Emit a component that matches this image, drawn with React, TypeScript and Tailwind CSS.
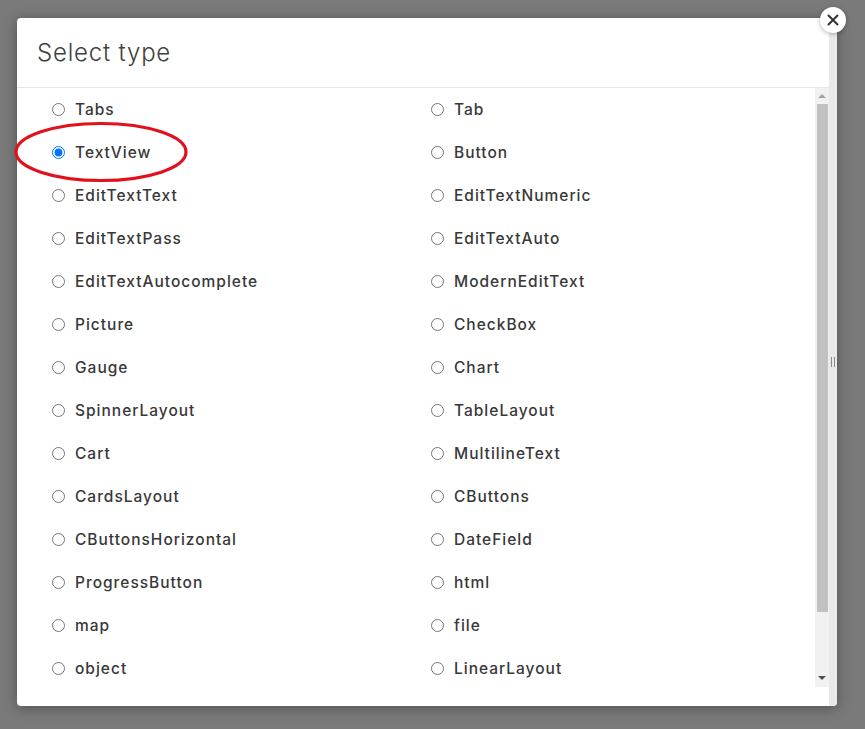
import { useState } from "react";

const types = [
  ["Tabs", "Tab"],
  ["TextView", "Button"],
  ["EditTextText", "EditTextNumeric"],
  ["EditTextPass", "EditTextAuto"],
  ["EditTextAutocomplete", "ModernEditText"],
  ["Picture", "CheckBox"],
  ["Gauge", "Chart"],
  ["SpinnerLayout", "TableLayout"],
  ["Cart", "MultilineText"],
  ["CardsLayout", "CButtons"],
  ["CButtonsHorizontal", "DateField"],
  ["ProgressButton", "html"],
  ["map", "file"],
  ["object", "LinearLayout"],
];

export default function App() {
  const [selected, setSelected] = useState<string>("TextView");

  return (
    <div
      className="w-[865px] h-[729px] bg-[#7a7a7a] overflow-hidden flex items-start"
      style={{ fontFamily: "Inter, 'Noto Sans', sans-serif" }}
    >
      {/* Dialog starts here. */}
      <div className="relative ml-[17px] mt-[18px] w-[820px] h-[688px] bg-white rounded-[4px] shadow-[0_2px_14px_rgba(0,0,0,0.35)] flex">
        <div className="flex-1 flex flex-col min-w-0">
          <div className="h-[70px] shrink-0 border-b border-[#e6e6e6] flex items-center pl-5">
            <h2 className="text-[24px] font-light text-[#404040] tracking-[0.8px]">Select type</h2>
          </div>

          <div className="flex h-[599px]">
            <div className="flex-1 overflow-hidden px-5">
              <div className="grid grid-cols-2">
                {types.map((pair) =>
                  pair.map((name) => (
                    <label
                      key={name}
                      className="h-[43px] flex items-center pl-[15px] gap-[10px] text-[15.5px] font-medium text-[#383838] tracking-[1px] cursor-pointer"
                    >
                      <input
                        type="radio"
                        name="type"
                        className="m-0 w-[13px] h-[13px]"
                        checked={selected === name}
                        onChange={() => setSelected(name)}
                      />
                      {name}
                    </label>
                  ))
                )}
              </div>
            </div>

            {/* Inner scrollbar */}
            <div className="w-[14px] bg-[#f1f1f1] flex flex-col items-center">
              <div className="h-[16px] flex items-center justify-center">
                <div className="w-0 h-0 border-l-[4px] border-r-[4px] border-b-[4px] border-l-transparent border-r-transparent border-b-[#a3a3a3]" />
              </div>
              <div className="w-[11px] ml-[1px] h-[508px] bg-[#c1c1c1]" />
              <div className="flex-1" />
              <div className="h-[18px] flex items-center justify-center">
                <div className="w-0 h-0 border-l-[4px] border-r-[4px] border-t-[4px] border-l-transparent border-r-transparent border-t-[#505050]" />
              </div>
            </div>
          </div>
        </div>

        {/* Right strip */}
        <div className="w-[8px] bg-[#e9e9e9] rounded-r-[4px] flex items-center justify-center gap-[2px]">
          <div className="w-[1px] h-[10px] bg-[#8a8a8a]" />
          <div className="w-[1px] h-[10px] bg-[#8a8a8a]" />
        </div>

        {/* Close button */}
        <button
          type="button"
          className="absolute -top-[11px] -right-[9px] w-[26px] h-[26px] rounded-full bg-white shadow-[0_1px_4px_rgba(0,0,0,0.3)] flex items-center justify-center"
        >
          <svg width="12" height="12" viewBox="0 0 12 12">
            <path d="M1.5 1.5 L10.5 10.5 M10.5 1.5 L1.5 10.5" stroke="#333" strokeWidth="2" strokeLinecap="round" />
          </svg>
        </button>
      </div>

      {/* Red annotation ellipse */}
      <svg className="absolute left-[13px] top-[121px] pointer-events-none" width="176" height="62" viewBox="0 0 176 62">
        <ellipse cx="88" cy="31" rx="85" ry="28.5" fill="none" stroke="#e3101c" strokeWidth="3.2" />
      </svg>
    </div>
  );
}
